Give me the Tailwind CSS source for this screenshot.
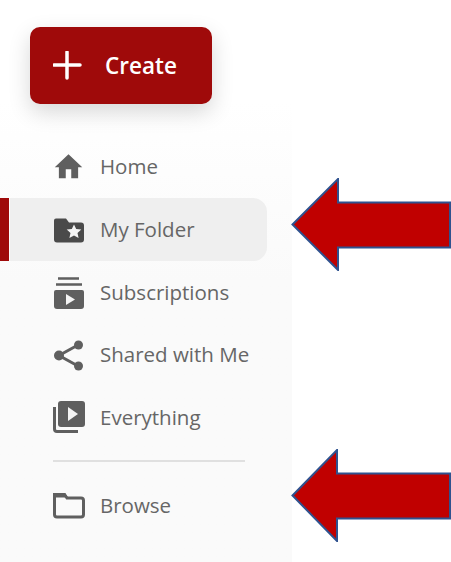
<!DOCTYPE html>
<html><head><meta charset="utf-8"><script src="https://cdn.jsdelivr.net/npm/@tailwindcss/browser@4"></script></head>
<body class="bg-white">
<div class="relative w-[451px] h-[562px] overflow-hidden bg-white font-['Open_Sans',sans-serif]">
  <aside class="w-[292px] h-[562px] bg-gradient-to-b from-white from-[18%] to-[#fafafa] to-[50%] pt-[27px] flex flex-col">
    <button class="ml-[30px] w-[182px] h-[77px] rounded-[10px] bg-[#9f0a0a] shadow-[0_8px_22px_rgba(0,0,0,0.16)] flex items-center pl-[23px] text-white text-[22.5px] font-semibold">
      <svg width="30" height="30" viewBox="0 0 30 30" class="mr-[22px]"><path d="M15 2v26M2 15h26" stroke="#fff" stroke-width="3.500" stroke-linecap="round" transform="translate(-1 -1)"/></svg>
      Create
    </button>
    <nav class="mt-[32px] flex flex-col text-[20.5px] leading-[28px] text-[#666]">
      <a class="h-[62px] flex items-center pl-[52px]">
        <svg width="33" height="33" viewBox="0 0 24 24" class="shrink-0 mb-[2px]"><path fill="#5f5f5f" d="M10 20.500v-6.500h4v6.500h5v-8h3L12 3 2 12.500h3v8z"/></svg>
        <span class="ml-[15px] pb-[2px]">Home</span>
      </a>
      <a class="h-[63px] flex items-center">
        <span class="w-[9px] h-full bg-[#9f0a0a] shrink-0"></span>
        <span class="ml-[1px] w-[257px] h-full rounded-r-[14px] bg-[#efefef] flex items-center pl-[43px]">
          <svg width="32" height="32" viewBox="0 0 32 32" class="shrink-0"><path fill="#4a4a4a" d="M3 4.500h10l3 4h12a3 3 0 0 1 3 3v14a3 3 0 0 1-3 3H4a3 3 0 0 1-3-3v-19a2 2 0 0 1 2-2z"/><path fill="#f4f4f4" d="M21 10.500l2.200 4.600 5.100.5-3.800 3.400 1.100 5-4.600-2.600-4.600 2.600 1.100-5-3.800-3.400 5.100-.5z"/></svg>
          <span class="ml-[15px] pb-[2px]">My Folder</span>
        </span>
      </a>
      <a class="h-[63px] flex items-center pl-[53px]">
        <svg width="32" height="32" viewBox="0 0 32 32" class="shrink-0"><path fill="none" stroke="#5f5f5f" stroke-width="2.500" d="M5 1.500h21M3 7.500h26"/><path fill="#5f5f5f" d="M3 13h26a2 2 0 0 1 2 2v14a3 3 0 0 1-3 3H4a3 3 0 0 1-3-3V15a2 2 0 0 1 2-2z"/><path fill="#f4f4f4" d="M13 17l9 5.500-9 5.500z"/></svg>
        <span class="ml-[15px] pb-[2px]">Subscriptions</span>
      </a>
      <a class="h-[62px] flex items-center pl-[53px]">
        <svg width="32" height="32" viewBox="0 0 32 32" class="shrink-0"><path fill="none" stroke="#5f5f5f" stroke-width="3" d="M25 6L6 16.500l19 10.500"/><circle cx="25.500" cy="6" r="4.500" fill="#5f5f5f"/><circle cx="6" cy="16.500" r="5" fill="#5f5f5f"/><circle cx="25.500" cy="27" r="4.500" fill="#5f5f5f"/></svg>
        <span class="ml-[15px] pb-[2px]">Shared with Me</span>
      </a>
      <a class="h-[63px] flex items-center pl-[53px]">
        <svg width="32" height="32" viewBox="0 0 32 32" class="shrink-0 mb-[2px]"><path fill="#5f5f5f" d="M8 0h21a3 3 0 0 1 3 3v20a3 3 0 0 1-3 3H8a3 3 0 0 1-3-3V3a3 3 0 0 1 3-3z"/><path fill="#f4f4f4" d="M15 6l10 7-10 7z"/><path fill="none" stroke="#5f5f5f" stroke-width="3" d="M1.500 6v22a2.500 2.500 0 0 0 2.500 2.500h21"/></svg>
        <span class="ml-[15px] pb-[2px]">Everything</span>
      </a>
      <div class="ml-[53px] mr-[47px] mt-[11px] h-[2px] bg-[#e0e0e0] shrink-0"></div>
      <a class="mt-[13px] h-[62px] flex items-center pl-[53px]">
        <svg width="32" height="32" viewBox="0 0 32 32" class="shrink-0"><path fill="#5f5f5f" d="M1.500 3h10.500l3 4.500H1.500z"/><path fill="none" stroke="#5f5f5f" stroke-width="3" d="M1.500 4.500h10l2.500 3.500H28a2.500 2.500 0 0 1 2.500 2.500v14a2.500 2.500 0 0 1-2.500 2.500H4A2.500 2.500 0 0 1 1.500 24.500z"/></svg>
        <span class="ml-[15px] pb-[2px]">Browse</span>
      </a>
    </nav>
  </aside>
  <svg class="absolute left-[291px] top-[178px]" width="160" height="93" viewBox="0 0 160 93"><path fill="#c00000" stroke="#2f528f" stroke-width="2" d="M1.500 46.500L47 1v23.500h112v45H47V92z"/></svg>
  <svg class="absolute left-[291px] top-[449px]" width="160" height="93" viewBox="0 0 160 93"><path fill="#c00000" stroke="#2f528f" stroke-width="2" d="M1.500 46.500L46 1v23.500h113v45H46V92z"/></svg>
</div>
</body></html>
